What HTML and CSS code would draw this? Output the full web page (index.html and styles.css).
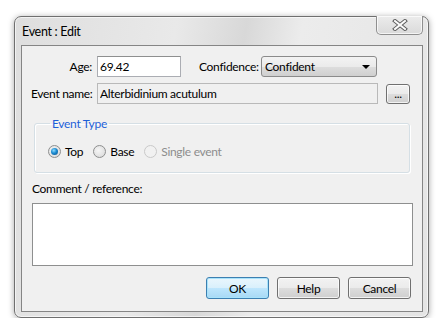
FILE: index.html
```html
<!DOCTYPE html>
<html lang="en">
<head>
  <meta charset="UTF-8">
  <title>Event : Edit</title>
  <link rel="stylesheet" href="styles.css">
</head>
<body>
  <div class="window">
    <div class="titlebar">
      <span class="title">Event : Edit</span>
      <button class="close" title="Close">
        <svg width="16" height="12" viewBox="0 0 16 12">
          <path d="M3 2 L13 10 M13 2 L3 10" stroke="#5c5c5c" stroke-width="4" stroke-linecap="square"/>
          <path d="M3 2 L13 10 M13 2 L3 10" stroke="#fafafa" stroke-width="2" stroke-linecap="square"/>
        </svg>
      </button>
    </div>

    <div class="client">
      <div class="row">
        <label class="lbl">Age:</label>
        <input class="field age" type="text" value="69.42">
        <label class="lbl-conf">Confidence:</label>
        <div class="select">
          <span>Confident</span>
          <span class="arrow"></span>
        </div>
      </div>
      <div class="row">
        <label class="lbl">Event name:</label>
        <input class="field name" type="text" value="Alterbidinium acutulum" readonly>
        <button class="btn dots">...</button>
      </div>

      <fieldset class="group">
        <legend>Event Type</legend>
        <div class="radios">
          <span class="opt"><span class="radio checked"></span>Top</span>
          <span class="opt"><span class="radio"></span>Base</span>
          <span class="opt disabled"><span class="radio"></span>Single event</span>
        </div>
      </fieldset>

      <div class="comment-label">Comment / reference:</div>
      <textarea class="comment"></textarea>

      <div class="buttons">
        <button class="btn default">OK</button>
        <button class="btn">Help</button>
        <button class="btn">Cancel</button>
      </div>
    </div>
  </div>
</body>
</html>
```

FILE: styles.css
```css
body {
  margin: 0;
  background: #fff;
  font-family: Lato, "Noto Sans", sans-serif;
  font-size: 12px;
  letter-spacing: -0.3px;
  color: #000;
  white-space: nowrap;
}

.window {
  box-sizing: border-box;
  width: 415px;
  margin: 16px 0 0 14px;
  padding: 0 5px 5px 6px;
  border: 1px solid #6f6f6f;
  border-radius: 7px;
  background: linear-gradient(100deg, #dedede 0%, #e9e9e9 35%, #d8d8d8 50%, #ececec 62%, #e4e4e4 100%);
  box-shadow: 0 1px 6px rgba(0, 0, 0, 0.35), inset 0 0 0 1px rgba(255, 255, 255, 0.6);
}

.titlebar {
  display: flex;
  justify-content: space-between;
  align-items: center;
  height: 28px;
}

.title {
  padding-left: 1px;
  font-size: 12.5px;
}

.close {
  align-self: flex-start;
  margin-top: -1px;
  width: 47px;
  height: 19px;
  padding: 0;
  display: flex;
  align-items: center;
  justify-content: center;
  border: 1px solid #8f8f8f;
  border-top: none;
  border-radius: 0 0 5px 5px;
  background: linear-gradient(#ececec, #dadada);
  box-shadow: inset 0 0 0 1px rgba(255, 255, 255, 0.7);
}

.client {
  border: 1px solid #858585;
  background: #f0f0f0;
  padding: 10px 0 12px 0;
}

.row {
  display: flex;
  align-items: center;
  padding-left: 9px;
  margin-bottom: 6px;
}

.lbl {
  width: 61px;
  margin-right: 5px;
  text-align: right;
}

.field {
  box-sizing: border-box;
  height: 21px;
  margin: 0;
  padding: 0 2px;
  font: inherit;
  letter-spacing: inherit;
  border: 1px solid #abadb3;
  border-top-color: #8e8f8f;
  background: #fff;
  outline: none;
}

.age {
  width: 84px;
}

.lbl-conf {
  width: 57px;
  margin-left: 18px;
  margin-right: 5px;
}

.select {
  box-sizing: border-box;
  width: 116px;
  height: 21px;
  display: flex;
  align-items: center;
  justify-content: space-between;
  padding: 0 6px 0 3px;
  border: 1px solid #8b8b8b;
  border-radius: 3px;
  background: linear-gradient(#f3f3f3 0%, #ebebeb 50%, #dddddd 51%, #cfcfcf 100%);
}

.arrow {
  width: 0;
  height: 0;
  border-left: 4px solid transparent;
  border-right: 4px solid transparent;
  border-top: 4px solid #000;
}

.name {
  width: 281px;
  background: #f0f0f0;
  border-color: #b9b9b9;
}

.btn {
  box-sizing: border-box;
  width: 63px;
  height: 22px;
  padding: 0;
  font: inherit;
  letter-spacing: inherit;
  color: #000;
  border: 1px solid #707070;
  border-radius: 3px;
  background: linear-gradient(#f2f2f2 0%, #ebebeb 50%, #dddddd 51%, #cfcfcf 100%);
  box-shadow: inset 0 0 0 1px rgba(255, 255, 255, 0.75);
}

.dots {
  width: 24px;
  height: 20px;
  margin-left: 8px;
  line-height: 12px;
}

.default {
  border-color: #3c7fb1;
  box-shadow: inset 0 0 0 1px #a8e3fb;
  background: linear-gradient(#eaf6fd 0%, #d9f0fc 50%, #bee6fd 51%, #a7d9f5 100%);
}

.group {
  margin: 12px 12px 0 12px;
  padding: 12px 0 13px 13px;
  border: 1px solid #d5dfe5;
  border-radius: 3px;
  box-shadow: 1px 1px 0 #fff, inset 1px 1px 0 #fff;
}

.group legend {
  margin-left: 2px;
  padding: 0 2px;
  color: #1e5fd8;
}

.radios {
  display: flex;
  align-items: center;
  height: 16px;
}

.opt {
  display: flex;
  align-items: center;
  margin-right: 10px;
}

.radio {
  box-sizing: border-box;
  width: 13px;
  height: 13px;
  margin-right: 4px;
  border: 1px solid #8e8f8f;
  border-radius: 50%;
  background: radial-gradient(circle at 40% 40%, #f6f6f6, #d6d6d6);
  display: flex;
  align-items: center;
  justify-content: center;
}

.radio.checked::after {
  content: "";
  width: 7px;
  height: 7px;
  border-radius: 50%;
  background: radial-gradient(circle at 40% 35%, #8fdcff 0%, #1a8ad0 45%, #0f4f86 100%);
}

.disabled {
  color: #8d8d8d;
}

.disabled .radio {
  border-color: #c9c9c9;
  background: #f1f1f1;
}

.comment-label {
  margin: 8px 0 6px 10px;
  line-height: 16px;
}

.comment {
  display: block;
  box-sizing: border-box;
  width: 381px;
  height: 63px;
  margin: 0 0 0 10px;
  border: 1px solid #8e8f8f;
  background: #fff;
  resize: none;
  outline: none;
}

.buttons {
  display: flex;
  justify-content: flex-end;
  gap: 8px;
  margin-top: 11px;
  padding-right: 11px;
}
```
